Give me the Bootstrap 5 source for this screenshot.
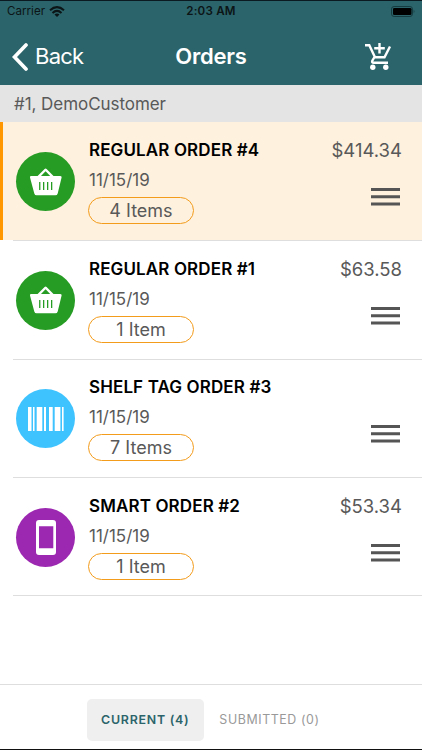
<!DOCTYPE html>
<html lang="en">
<head>
<meta charset="utf-8">
<meta name="viewport" content="width=device-width, initial-scale=1">
<title>Orders</title>
<link href="https://cdn.jsdelivr.net/npm/bootstrap@5.3.0/dist/css/bootstrap.min.css" rel="stylesheet">
<style>
body{font-family:Inter,"Liberation Sans",sans-serif;color:#595959;height:750px;overflow:hidden;border-top:1px solid #0b1a20;border-bottom:1px solid #111}
svg{display:block;flex:none}
.top-area{background:#2b646a;height:84px}
.status{height:21px;font-size:11.6px;line-height:21px;color:#0b1416;padding:0 7px}
.status .side{width:120px}
.clock{font-weight:600;letter-spacing:.2px}
.title-bar{height:63px;padding:6px 12px 0;color:#fff;font-size:22px}
.title-bar .side{width:110px}
.cart-side{padding-right:18px}
.back{gap:7px;letter-spacing:-.75px}
.heading{font-weight:600;letter-spacing:-.2px}
.customer{background:#e4e4e4;height:37px;line-height:38px;padding-left:14px;font-size:17px;letter-spacing:-.06px}
.order{height:118.4px;padding:18.4px 20px 0 16px}
.order.active{background:#fef1de;box-shadow:inset 3px 0 #ff9800}
.order + .order::before,.order:last-child::after{content:"";position:absolute;left:13px;right:0;top:0;height:1px;background:#dedede}
.order:last-child::after{top:auto;bottom:0}
.disc{width:59px;height:59px;margin-top:12px;margin-right:14px}
.green{background:#279c24}.blue{background:#3fc3ff}.purple{background:#9c27b0}
.name{font-size:17px;line-height:20px;font-weight:600;letter-spacing:.12px;color:#000;white-space:nowrap}
.date{font-size:17px;line-height:20px;margin-top:10px}
.pill{width:106px;height:27px;border:1.5px solid #f39c1c;font-size:18px;line-height:25px;margin-top:7px;margin-left:-1px}
.price{font-size:18.5px;line-height:20px}
.grip{margin:28px 2px 0 0}
.foot{border-top:1px solid #dedede;height:65px;padding:14px 0 0 86.5px;font-size:12.4px}
.foot .btn{font:inherit;letter-spacing:.6px;border:0;padding:0;height:42px;border-radius:5px}
.foot .current{width:117.5px;background:#efefef;color:#2b646a;font-weight:600;letter-spacing:.75px}
.foot .submitted{width:131px;color:#999}
</style>
<script src="https://cdn.jsdelivr.net/npm/bootstrap@5.3.0/dist/js/bootstrap.bundle.min.js"></script>
</head>
<body class="d-flex flex-column bg-white">
<svg width="0" height="0" class="position-absolute">
 <symbol id="basket" viewBox="0 0 34 28"><path fill="#fff" fill-rule="evenodd" d="M2 8H8.6L15.6 .9Q16.6 0 17.6 .9L24.5 8H31.3Q33 8 32.6 9.6L28.7 25.4Q28.2 27.3 26.4 27.3H7.6Q5.8 27.3 5.3 25.4L1 9.6Q.5 8 2 8ZM12 8H21.2L16.6 3.3ZM10.1 14V22H11.4V14ZM14 14V22H15.3V14ZM18 14V22H19.3V14ZM22 14V22H23.3V14Z"/></symbol>
 <symbol id="bars" viewBox="0 0 29 18"><path fill="#555" d="M0 0H29V3H0ZM0 7.3H29V10.3H0ZM0 14.6H29V17.6H0Z"/></symbol>
</svg>
<header class="top-area">
 <div class="status d-flex justify-content-between">
  <div class="side d-flex align-items-center"><span>Carrier</span>
   <svg class="ms-1" width="16" height="11" viewBox="0 0 16 11"><g fill="none" stroke="#0b1416" stroke-width="2"><path d="M1 4.2Q8-2 15 4.2M3.5 6.9Q8 2.8 12.5 6.9"/></g><path fill="#0b1416" d="M5.5 8.4Q8 6.5 10.5 8.4L8 11Z"/></svg></div>
  <span class="clock">2:03 AM</span>
  <div class="side d-flex align-items-center justify-content-end">
   <svg width="24" height="11" viewBox="0 0 24 11"><rect x=".5" y=".5" width="21" height="10" rx="2.6" fill="none" stroke="#153c41"/><rect x="2" y="2" width="18.5" height="7" rx="1.3"/><path d="M22.7 3.8Q24.2 5.5 22.7 7.2Z" fill="#153c41"/></svg></div>
 </div>
 <div class="title-bar d-flex align-items-center justify-content-between">
  <div class="side back d-flex align-items-center"><svg width="16" height="28" viewBox="0 0 16 28"><path d="M14 2 2.5 14 14 26" fill="none" stroke="#fff" stroke-width="3.7" stroke-linecap="round"/></svg><span>Back</span></div>
  <span class="heading">Orders</span>
  <div class="side cart-side d-flex justify-content-end"><svg width="28" height="28" viewBox="0 0 28 28"><g fill="none" stroke="#fff" stroke-width="2.4"><path d="M1 2.2H5.3L11 14.2H20.5L26 3.5M10.5 14 8.3 17.7Q7.5 19.7 9.8 19.7H24M15.5 0V10.4M10.2 5.2H20.8"/></g><g fill="#fff"><circle cx="8.8" cy="24.3" r="2.7"/><circle cx="21.8" cy="24.3" r="2.7"/></g></svg></div>
 </div>
</header>
<div class="customer">#1, DemoCustomer</div>
<main class="flex-grow-1">
 <article class="order active d-flex position-relative">
  <div class="disc green rounded-circle d-flex align-items-center justify-content-center"><svg width="34" height="28"><use href="#basket"/></svg></div>
  <div class="flex-grow-1"><div class="name">REGULAR ORDER #4</div><div class="date">11/15/19</div><div class="pill rounded-pill text-center">4 Items</div></div>
  <div class="d-flex flex-column align-items-end"><div class="price">$414.34</div><svg class="grip" width="29" height="18"><use href="#bars"/></svg></div>
 </article>
 <article class="order d-flex position-relative">
  <div class="disc green rounded-circle d-flex align-items-center justify-content-center"><svg width="34" height="28"><use href="#basket"/></svg></div>
  <div class="flex-grow-1"><div class="name">REGULAR ORDER #1</div><div class="date">11/15/19</div><div class="pill rounded-pill text-center">1 Item</div></div>
  <div class="d-flex flex-column align-items-end"><div class="price">$63.58</div><svg class="grip" width="29" height="18"><use href="#bars"/></svg></div>
 </article>
 <article class="order d-flex position-relative">
  <div class="disc blue rounded-circle d-flex align-items-center justify-content-center"><svg width="36" height="24" viewBox="0 0 36 24"><path fill="#fff" d="M0 0H3.5V24H0ZM5 0H6.5V24H5ZM8.7 0H14.3V24H8.7ZM16 0H18V24H16ZM21 0H24.7V24H21ZM26.7 0H32.4V24H26.7ZM34 0H35.6V24H34Z"/></svg></div>
  <div class="flex-grow-1"><div class="name">SHELF TAG ORDER #3</div><div class="date">11/15/19</div><div class="pill rounded-pill text-center">7 Items</div></div>
  <div class="d-flex flex-column align-items-end"><div class="price">&nbsp;</div><svg class="grip" width="29" height="18"><use href="#bars"/></svg></div>
 </article>
 <article class="order d-flex position-relative">
  <div class="disc purple rounded-circle d-flex align-items-center justify-content-center"><svg width="20" height="35" viewBox="0 0 20 35"><path fill="#fff" fill-rule="evenodd" d="M3 0H17Q20 0 20 3V32Q20 35 17 35H3Q0 35 0 32V3Q0 0 3 0ZM3 6.3V28.3H17.3V6.3Z"/></svg></div>
  <div class="flex-grow-1"><div class="name">SMART ORDER #2</div><div class="date">11/15/19</div><div class="pill rounded-pill text-center">1 Item</div></div>
  <div class="d-flex flex-column align-items-end"><div class="price">$53.34</div><svg class="grip" width="29" height="18"><use href="#bars"/></svg></div>
 </article>
</main>
<footer class="foot d-flex"><button class="btn current">CURRENT (4)</button><button class="btn submitted">SUBMITTED (0)</button></footer>
</body>
</html>
